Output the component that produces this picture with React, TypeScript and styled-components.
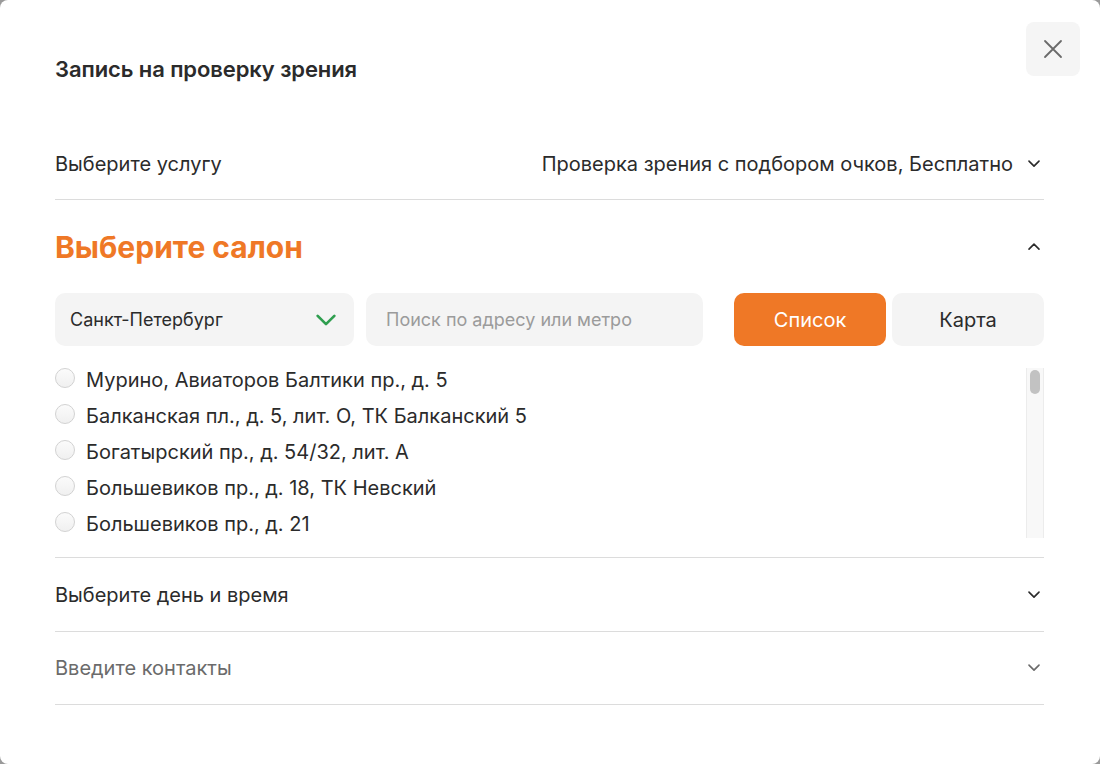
import React from "react";
import styled, { createGlobalStyle } from "styled-components";

const GlobalStyle = createGlobalStyle`
  * { box-sizing: border-box; }
  html, body { margin: 0; padding: 0; }
  body {
    background: #9a9a9a;
    font-family: Inter, "Noto Sans", "Liberation Sans", sans-serif;
    color: #2b2b2b;
  }
`;

const ORANGE = "#ef7826";

const Modal = styled.div`
  position: relative;
  width: 1100px;
  height: 764px;
  background: #fff;
  border-radius: 8px;
  padding: 55px 56px 0 55px;
  display: flex;
  flex-direction: column;
`;

const Title = styled.h2`
  margin: 0;
  font-size: 22px;
  line-height: 28px;
  font-weight: 600;
  color: #2b2b2b;
  letter-spacing: -0.1px;
`;

const CloseButton = styled.button`
  position: absolute;
  top: 22px;
  right: 20px;
  width: 54px;
  height: 54px;
  border: none;
  border-radius: 8px;
  background: #f5f5f5;
  display: flex;
  align-items: center;
  justify-content: center;
  padding: 0;
  cursor: pointer;
`;

const Row = styled.div<{ $height: number; $top?: number }>`
  display: flex;
  align-items: center;
  justify-content: space-between;
  height: ${(p) => p.$height}px;
  margin-top: ${(p) => p.$top ?? 0}px;
  border-bottom: 1px solid #dcdcdc;
`;

const RowLabel = styled.span<{ $muted?: boolean }>`
  font-size: 20px;
  line-height: 28px;
  color: ${(p) => (p.$muted ? "#6b6b6b" : "#2b2b2b")};
`;

const RowValue = styled.div`
  display: flex;
  align-items: center;
  gap: 14px;
  font-size: 20px;
  line-height: 28px;
  color: #2b2b2b;
`;

const Section = styled.div`
  display: flex;
  flex-direction: column;
  padding: 29px 0 19px;
  border-bottom: 1px solid #dcdcdc;
`;

const SectionHead = styled.div`
  display: flex;
  align-items: center;
  justify-content: space-between;
  height: 36px;
`;

const SectionTitle = styled.h3`
  margin: 0;
  font-size: 30px;
  line-height: 36px;
  font-weight: 700;
  color: ${ORANGE};
`;

const Controls = styled.div`
  display: flex;
  align-items: stretch;
  height: 53px;
  margin-top: 28px;
`;

const CitySelect = styled.div`
  width: 299px;
  display: flex;
  align-items: center;
  justify-content: space-between;
  padding: 0 18px 0 15px;
  background: #f4f4f4;
  border-radius: 10px;
  font-size: 18px;
  color: #2b2b2b;
`;

const SearchInput = styled.input`
  width: 337px;
  margin-left: 12px;
  border: none;
  outline: none;
  background: #f4f4f4;
  border-radius: 10px;
  padding: 0 20px;
  font-family: inherit;
  font-size: 18px;
  color: #2b2b2b;
  &::placeholder { color: #9b9b9b; }
`;

const ToggleButton = styled.button<{ $active?: boolean }>`
  width: 152px;
  border: none;
  border-radius: 10px;
  font-family: inherit;
  font-size: 20px;
  background: ${(p) => (p.$active ? ORANGE : "#f4f4f4")};
  color: ${(p) => (p.$active ? "#fff" : "#2b2b2b")};
  cursor: pointer;
`;

const ToggleGroup = styled.div`
  display: flex;
  gap: 6px;
  margin-left: auto;
`;

const ListArea = styled.div`
  display: flex;
  height: 170px;
  margin-top: 22px;
`;

const SalonList = styled.ul`
  list-style: none;
  margin: 0;
  padding: 0;
  flex: 1;
  display: flex;
  flex-direction: column;
  gap: 12px;
  overflow: hidden;
`;

const ScrollTrack = styled.div`
  width: 18px;
  flex-shrink: 0;
  background: #f8f8f8;
  border-left: 1px solid #ececec;
  border-right: 1px solid #ececec;
  padding: 2px 3px 0;
`;

const ScrollThumb = styled.div`
  height: 24px;
  border-radius: 6px;
  background: #c2c2c2;
`;

const SalonItem = styled.li`
  display: flex;
  align-items: center;
  gap: 11px;
  height: 24px;
  flex-shrink: 0;
  font-size: 20px;
  line-height: 24px;
  color: #2b2b2b;
`;

const Radio = styled.span`
  width: 20px;
  height: 20px;
  border-radius: 50%;
  border: 1px solid #d2d2d2;
  background: linear-gradient(#fbfbfb, #f0f0f0);
  flex-shrink: 0;
  margin-top: -4px;
`;

const Chevron = ({ up, color = "#2b2b2b", w = 12 }: { up?: boolean; color?: string; w?: number }) => (
  <svg width={w} height={w * 0.6} viewBox="0 0 12 7" fill="none">
    <path
      d={up ? "M1 6L6 1L11 6" : "M1 1L6 6L11 1"}
      stroke={color}
      strokeWidth={1.6}
      strokeLinecap="round"
      strokeLinejoin="round"
    />
  </svg>
);

const ChevronSlot = styled.span`
  display: flex;
  align-items: center;
  justify-content: center;
  width: 14px;
  margin-right: 3px;
`;

const salons = [
  "Мурино, Авиаторов Балтики пр., д. 5",
  "Балканская пл., д. 5, лит. О, ТК Балканский 5",
  "Богатырский пр., д. 54/32, лит. А",
  "Большевиков пр., д. 18, ТК Невский",
  "Большевиков пр., д. 21",
];

export default function App() {
  return (
    <>
      <GlobalStyle />
      <Modal>
        <CloseButton aria-label="Закрыть">
          <svg width="20" height="20" viewBox="0 0 20 20" fill="none">
            <path d="M2 2L18 18M18 2L2 18" stroke="#6a6a6a" strokeWidth="1.8" strokeLinecap="round" />
          </svg>
        </CloseButton>

        <Title>Запись на проверку зрения</Title>

        <Row $height={72} $top={45}>
          <RowLabel>Выберите услугу</RowLabel>
          <RowValue>
            Проверка зрения с подбором очков, Бесплатно
            <ChevronSlot>
              <Chevron />
            </ChevronSlot>
          </RowValue>
        </Row>

        <Section>
          <SectionHead>
            <SectionTitle>Выберите салон</SectionTitle>
            <ChevronSlot>
              <Chevron up />
            </ChevronSlot>
          </SectionHead>

          <Controls>
            <CitySelect>
              Санкт-Петербург
              <Chevron color="#2f9e4f" w={20} />
            </CitySelect>
            <SearchInput placeholder="Поиск по адресу или метро" />
            <ToggleGroup>
              <ToggleButton $active>Список</ToggleButton>
              <ToggleButton>Карта</ToggleButton>
            </ToggleGroup>
          </Controls>

          <ListArea>
            <SalonList>
              {salons.map((s) => (
                <SalonItem key={s}>
                  <Radio />
                  {s}
                </SalonItem>
              ))}
            </SalonList>
            <ScrollTrack>
              <ScrollThumb />
            </ScrollTrack>
          </ListArea>
        </Section>

        <Row $height={74}>
          <RowLabel>Выберите день и время</RowLabel>
          <ChevronSlot>
            <Chevron />
          </ChevronSlot>
        </Row>
        <Row $height={73}>
          <RowLabel $muted>Введите контакты</RowLabel>
          <ChevronSlot>
            <Chevron color="#6b6b6b" />
          </ChevronSlot>
        </Row>
      </Modal>
    </>
  );
}
